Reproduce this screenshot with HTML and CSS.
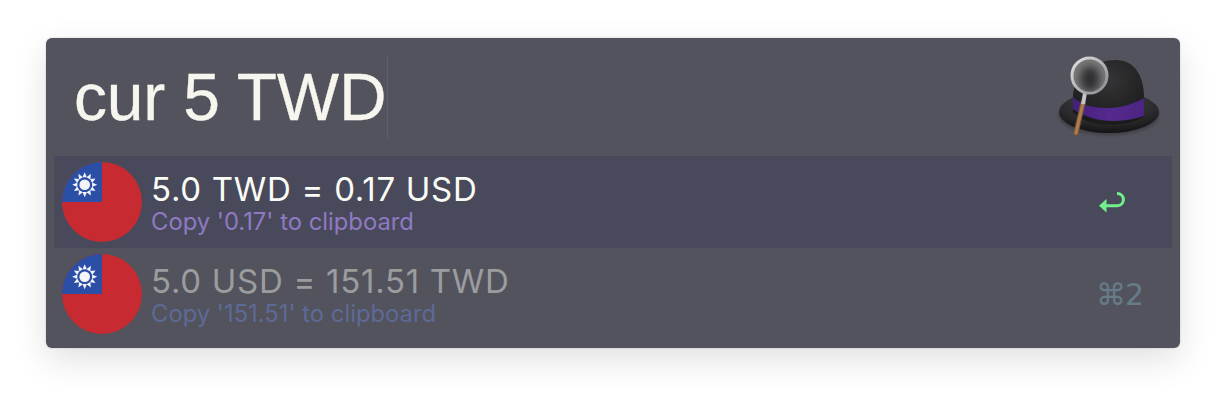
FILE: index.html
```html
<!DOCTYPE html>
<html lang="en">
<head>
<meta charset="utf-8">
<title>Alfred</title>
<link rel="stylesheet" href="styles.css">
</head>
<body>
<main class="window">
  <header class="search">
    <div class="query"><span class="query-text">cur 5 TWD</span><span class="caret"></span></div>
    <svg class="hat" width="104" height="92" viewBox="0 0 104 92" aria-label="Alfred">
      <defs>
        <radialGradient id="brim" cx="50%" cy="25%" r="75%"><stop offset="0" stop-color="#454547"/><stop offset=".7" stop-color="#29292b"/><stop offset="1" stop-color="#131314"/></radialGradient>
        <radialGradient id="crown" cx="50%" cy="30%" r="70%"><stop offset="0" stop-color="#353537"/><stop offset="1" stop-color="#1a1a1b"/></radialGradient>
        <linearGradient id="ring" x1="0" y1="0" x2="1" y2="1"><stop offset="0" stop-color="#e2e2e2"/><stop offset="1" stop-color="#8a8a8e"/></linearGradient>
        <linearGradient id="band" x1="0" y1="0" x2="1" y2="0"><stop offset="0" stop-color="#44207a"/><stop offset=".5" stop-color="#55298f"/><stop offset="1" stop-color="#4c2582"/></linearGradient>
        <filter id="soft" x="-50%" y="-50%" width="200%" height="200%"><feGaussianBlur stdDeviation="4"/></filter>
        <filter id="shade" x="-20%" y="-20%" width="140%" height="150%"><feGaussianBlur stdDeviation="1.500"/></filter>
        <clipPath id="glass"><circle cx="33.500" cy="25.500" r="16.500"/></clipPath>
      </defs>
      <ellipse cx="53" cy="65" rx="50" ry="20" fill="#111" opacity=".3" filter="url(#shade)"/>
      <ellipse cx="53" cy="62" rx="50" ry="21" fill="url(#brim)"/>
      <path d="M17 48C17 22 40 10 60 10C78 10 88 25 88 48V67C70 78 30 78 17 62Z" fill="url(#crown)"/>
      <path d="M17 47C30 60 62 63 88 48V66C62 74 38 73 17 59Z" fill="url(#band)"/>
      <path d="M27 53L20 83" stroke="#7a5636" stroke-width="5.200" stroke-linecap="round"/>
      <path d="M27 53L20 83" stroke="#ab7d4f" stroke-width="3" stroke-linecap="round"/>
      <path d="M29 43L27 54" stroke="#c4c4c6" stroke-width="4"/>
      <circle cx="33.500" cy="25.500" r="17.500" fill="#7b7b7c" stroke="url(#ring)" stroke-width="3"/>
      <g clip-path="url(#glass)"><ellipse cx="34" cy="29" rx="10" ry="13" fill="#2f2f30" filter="url(#soft)"/></g>
    </svg>
  </header>
  <section class="results">
    <article class="row row-selected">
      <svg class="flag" width="80" height="80" viewBox="0 0 80 80" aria-hidden="true">
        <use href="#roc"/>
      </svg>
      <div class="texts">
        <div class="title">5.0 TWD = 0.17 USD</div>
        <div class="sub">Copy '0.17' to clipboard</div>
      </div>
      <svg class="return" width="30" height="24" viewBox="0 0 30 24" aria-label="Return">
        <path d="M7 15.700H19C23.500 15.700 25.400 12.800 25.400 9.500C25.400 6 23 3.600 19 3.600" fill="none" stroke="#70ef8a" stroke-width="3"/>
        <path d="M1 15.700L8.500 9V22.400Z" fill="#70ef8a"/>
      </svg>
    </article>
    <article class="row">
      <svg class="flag" width="80" height="80" viewBox="0 0 80 80" aria-hidden="true">
        <g id="roc">
          <circle cx="40" cy="40" r="40" fill="#c72a31"/>
          <path d="M40 0A40 40 0 0 0 0 40H40Z" fill="#2b4ea6"/>
          <g fill="#f4f5fa" transform="translate(22.700 22.700)">
            <path id="ray" d="M-2.200 -7.400L0 -12.500L2.200 -7.400Z"/>
            <use href="#ray" transform="rotate(30)"/><use href="#ray" transform="rotate(60)"/><use href="#ray" transform="rotate(90)"/>
            <use href="#ray" transform="rotate(120)"/><use href="#ray" transform="rotate(150)"/><use href="#ray" transform="rotate(180)"/>
            <use href="#ray" transform="rotate(210)"/><use href="#ray" transform="rotate(240)"/><use href="#ray" transform="rotate(270)"/>
            <use href="#ray" transform="rotate(300)"/><use href="#ray" transform="rotate(330)"/>
            <circle r="5.300"/>
          </g>
        </g>
      </svg>
      <div class="texts">
        <div class="title title-dim">5.0 USD = 151.51 TWD</div>
        <div class="sub sub-dim">Copy '151.51' to clipboard</div>
      </div>
      <div class="shortcut">⌘2</div>
    </article>
  </section>
</main>
</body>
</html>
```

FILE: styles.css
```css
* { box-sizing: border-box; }
html, body { margin: 0; height: 100%; background: #fff; overflow: hidden; }
body { padding: 38px 46px 54px; font-family: Inter, "Liberation Sans", sans-serif; }
.window {
  width: 1134px;
  height: 310px;
  background: #52535d;
  border-radius: 6px;
  box-shadow: 0 12px 34px rgba(0, 0, 0, .12), 0 0 2px rgba(0, 0, 0, .2);
  padding: 0 8px 8px;
  display: flex;
  flex-direction: column;
}
.search {
  height: 118px;
  display: flex;
  justify-content: space-between;
  align-items: flex-start;
}
.query {
  display: flex;
  margin-top: 17px;
  padding-left: 20px;
  height: 84px;
  align-items: center;
}
.query-text {
  font-family: "Liberation Sans", sans-serif;
  font-size: 66px;
  line-height: 84px;
  color: #f6f6ef;
  letter-spacing: -.2px;
  -webkit-text-stroke: .3px #f6f6ef;
}
.caret { width: 1px; height: 84px; margin-left: 1px; background: #5f606a; }
.hat { margin: 12px 12px 0 0; }
.results { display: flex; flex-direction: column; }
.row {
  height: 92px;
  display: flex;
  align-items: center;
  padding-left: 8px;
}
.row-selected { background: #484a5b; }
.flag { flex: none; }
.texts { flex: 1; margin-left: 9px; margin-top: 2px; }
.title {
  font-size: 33px;
  line-height: 34px;
  letter-spacing: .72px;
  color: #fbfbf6;
}
.title-dim { color: #9b9c9e; }
.sub {
  font-size: 23.800px;
  line-height: 26px;
  margin-top: 3px;
  color: #9079c2;
}
.sub-dim { color: #5d6a96; }
.return { margin-right: 44px; }
.shortcut {
  margin-right: 29px;
  font-family: "DejaVu Sans", sans-serif;
  font-size: 30px;
  letter-spacing: -1px;
  color: #677b88;
}
```
